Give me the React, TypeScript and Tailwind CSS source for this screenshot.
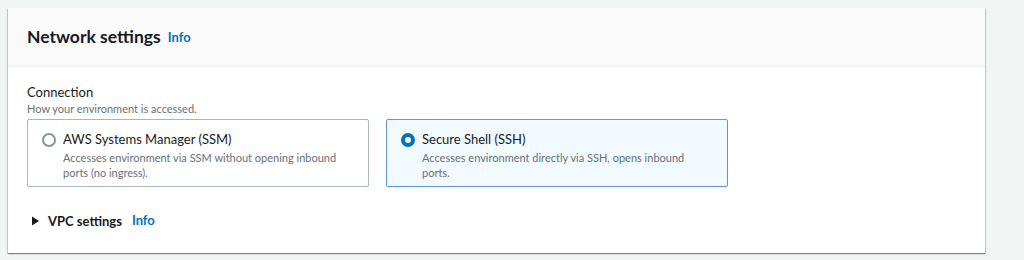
import React from "react";

type Option = {
  key: string;
  title: string;
  description: string;
  selected: boolean;
};

const OPTIONS: Option[] = [
  {
    key: "ssm",
    title: "AWS Systems Manager (SSM)",
    description: "Accesses environment via SSM without opening inbound ports (no ingress).",
    selected: false,
  },
  {
    key: "ssh",
    title: "Secure Shell (SSH)",
    description: "Accesses environment directly via SSH, opens inbound ports.",
    selected: true,
  },
];

function Radio({ checked }: { checked: boolean }) {
  return checked ? (
    <span className="mt-[5px] box-border block h-[14px] w-[14px] shrink-0 rounded-full border-[4px] border-[#0073bb] bg-white" />
  ) : (
    <span className="mt-[5px] box-border block h-[14px] w-[14px] shrink-0 rounded-full border-2 border-[#879596] bg-white" />
  );
}

function RadioCard({ option }: { option: Option }) {
  return (
    <div
      className={`flex h-[68px] w-[342px] gap-[7px] rounded-[2px] border pl-[14px] pr-[16px] pt-[8px] ${
        option.selected
          ? "border-[#5b9bd5] bg-[#f1faff]"
          : "border-[#aab7b8] bg-white"
      }`}
    >
      <Radio checked={option.selected} />
      <div>
        <div className="text-[13px] leading-[22px] text-[#16191f]">{option.title}</div>
        <div className="text-[11px] leading-[15px] text-[#687078]">{option.description}</div>
      </div>
    </div>
  );
}

export default function App() {
  return (
    <div className="h-[260px] w-[1024px] bg-[#f2f3f3] px-[8px] pt-[8px] font-['Lato',sans-serif]">
      <div className="w-[977px] bg-white shadow-[0_1px_1px_0_rgba(0,28,36,0.3),1px_1px_1px_0_rgba(0,28,36,0.15),-1px_1px_1px_0_rgba(0,28,36,0.15)]">
        <div className="flex h-[59px] items-center gap-[7px] border-b border-[#eaeded] bg-[#fafafa] px-[19px]">
          <h2 className="text-[17.5px] font-bold leading-[22px] text-[#16191f]">Network settings</h2>
          <a className="pt-[2px] text-[13px] font-bold text-[#0073bb]">Info</a>
        </div>
        <div className="px-[19px] pb-[22px] pt-[16px]">
          <div className="text-[13px] leading-[18px] text-[#16191f]">Connection</div>
          <div className="text-[11px] leading-[16px] text-[#687078]">How your environment is accessed.</div>
          <div className="mt-[2px] flex gap-[17px]">
            {OPTIONS.map((option) => (
              <RadioCard key={option.key} option={option} />
            ))}
          </div>
          <div className="mt-[24px] flex items-center gap-[9px] pl-[5px]">
            <svg width="7" height="10" viewBox="0 0 7 10" aria-hidden>
              <path d="M0 0.5 L7 5 L0 9.5 Z" fill="#16191f" />
            </svg>
            <span className="text-[13px] font-bold leading-[20px] text-[#16191f]">VPC settings</span>
            <a className="ml-[1px] text-[13px] font-bold text-[#0073bb]">Info</a>
          </div>
        </div>
      </div>
    </div>
  );
}
